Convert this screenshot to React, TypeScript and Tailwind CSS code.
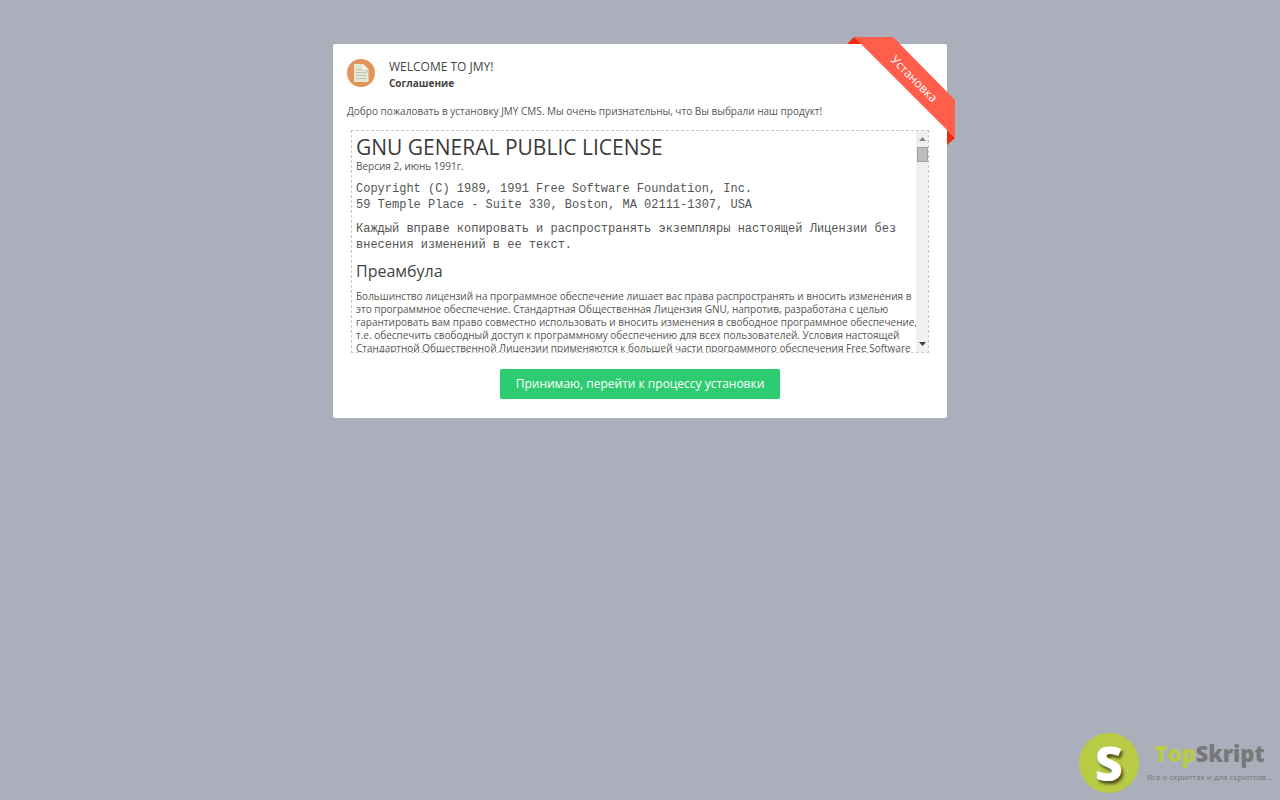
import { ReactNode } from 'react';

const preambleLines = [
    'Большинство лицензий на программное обеспечение лишает вас права распространять и вносить изменения в',
    'это программное обеспечение. Стандартная Общественная Лицензия GNU, напротив, разработана с целью',
    'гарантировать вам право совместно использовать и вносить изменения в свободное программное обеспечение,',
    'т.е. обеспечить свободный доступ к программному обеспечению для всех пользователей. Условия настоящей',
    'Стандартной Общественной Лицензии применяются к большей части программного обеспечения Free Software',
];

function DocumentIcon() {
    return (
        <svg viewBox="0 0 28 28" className="mt-px size-7 shrink-0" aria-hidden="true">
            <circle cx="14" cy="14" r="14" fill="#e2955a" />
            <path d="M7 5h9l5.500 5.500V23H7z" fill="#e9e5d3" />
            <path d="M16 10.500h5.500v3z" fill="#c5cdc4" />
            <path d="M16 5v5.500h5.500z" fill="#f7f8f2" />
            <path d="M9 10.500h6M9 13.500h10M9 16.500h10M9 19.500h10" stroke="#bcc5bf" strokeWidth="1" />
        </svg>
    );
}

function Ribbon() {
    return (
        <div className="absolute -top-[7px] -right-2 h-[108px] w-[108px]">
            <svg viewBox="0 0 108 108" className="absolute inset-0" aria-hidden="true">
                <path d="M0 7L7 0L15 7ZM100 93L108 101L100 108Z" fill="#f0290f" />
                <path d="M7 0H46L108 63V101Z" fill="#ff5e4c" />
            </svg>
            <span className="absolute top-[34px] left-[27px] w-20 rotate-45 text-center text-[12px] leading-4 text-white">
                Установка
            </span>
        </div>
    );
}

function Scrollbar() {
    return (
        <div className="flex w-3 shrink-0 flex-col items-center bg-[#f0f0f0]">
            <button type="button" aria-label="Вверх" className="flex h-4 w-full items-center justify-center">
                <svg viewBox="0 0 7 4" className="h-1 w-[7px]">
                    <path d="M0 4L3.500 0L7 4Z" fill="#8b8b8b" />
                </svg>
            </button>
            <div className="h-[15px] w-[11px] border border-[#a0a0a0] bg-[#bcbcbc]" />
            <button type="button" aria-label="Вниз" className="mt-auto flex h-4 w-full items-center justify-center">
                <svg viewBox="0 0 7 4" className="h-1 w-[7px]">
                    <path d="M0 0H7L3.500 4Z" fill="#404040" />
                </svg>
            </button>
        </div>
    );
}

function MonoText({ children }: { children: ReactNode }) {
    return <p className="mt-2 font-['Liberation_Mono',monospace] text-[12px] leading-4">{children}</p>;
}

function LicenseBox() {
    return (
        <div className="mx-1 mt-[11px] flex h-[223px] border border-dashed border-[#c8c8c8]">
            <div className="min-w-0 flex-1 overflow-hidden pt-[3px] pl-1 whitespace-nowrap">
                <h1 className="text-[21px] leading-[26px] text-[#3a3a3a]">GNU GENERAL PUBLIC LICENSE</h1>
                <p className="leading-[13px]">Версия 2, июнь 1991г.</p>
                <MonoText>
                    Copyright (C) 1989, 1991 Free Software Foundation, Inc.
                    <br />
                    59 Temple Place - Suite 330, Boston, MA 02111-1307, USA
                </MonoText>
                <MonoText>
                    Каждый вправе копировать и распространять экземпляры настоящей Лицензии без
                    <br />
                    внесения изменений в ее текст.
                </MonoText>
                <h2 className="mt-2 text-[16px] leading-5 text-[#444]">Преамбула</h2>
                <p className="mt-[9px] leading-[13px]">
                    {preambleLines.map((line) => (
                        <span key={line} className="block">
                            {line}
                        </span>
                    ))}
                </p>
            </div>
            <Scrollbar />
        </div>
    );
}

function SiteLogo() {
    return (
        <footer className="mt-auto flex items-center gap-2 self-end pr-2 pb-[7px]">
            <div className="flex size-[60px] items-center justify-center rounded-full bg-[#b9cb45]">
                <span className="text-[48px] leading-[60px] font-extrabold text-white [text-shadow:2px_3px_3px_#4b5420]">S</span>
            </div>
            <div className="pt-1 text-center">
                <p className="text-[22px] leading-6 font-extrabold text-[#77787a]">
                    <span className="text-[#b9cb45]">Top</span>Skript
                </p>
                <p className="text-[8px] leading-6 text-[#77787a]">Все о скриптах и для скриптов...</p>
            </div>
        </footer>
    );
}

export default function App() {
    return (
        <div className="flex min-h-screen flex-col bg-[#abaebb] pt-11 font-['Open_Sans',sans-serif] text-[10px] text-[#555]">
            <main className="relative mx-auto w-full max-w-[614px] rounded-xs bg-white p-[14px] pb-[19px]">
                <Ribbon />
                <header className="flex gap-[14px]">
                    <DocumentIcon />
                    <div>
                        <p className="text-[12px] leading-[18px] text-[#444]">WELCOME TO JMY!</p>
                        <p className="leading-[15px] font-bold text-[#444]">Соглашение</p>
                    </div>
                </header>
                <p className="mt-3 leading-4">
                    Добро пожаловать в установку JMY CMS. Мы очень признательны, что Вы выбрали наш продукт!
                </p>
                <LicenseBox />
                <div className="mt-4 flex justify-center">
                    <button type="button" className="rounded-xs bg-[#2ecc71] px-4 text-[12px] leading-[30px] text-white">
                        Принимаю, перейти к процессу установки
                    </button>
                </div>
            </main>
            <SiteLogo />
        </div>
    );
}
